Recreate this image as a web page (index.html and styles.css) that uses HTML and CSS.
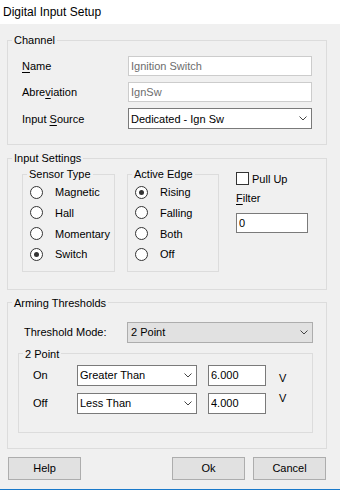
FILE: index.html
```html
<!DOCTYPE html>
<html lang="en">
<head>
  <meta charset="UTF-8">
  <title>Digital Input Setup</title>
  <link rel="stylesheet" href="styles.css">
</head>
<body>
  <div class="titlebar">Digital Input Setup</div>

  <div class="content">
    <fieldset class="group">
      <legend>Channel</legend>
      <div class="channel">
        <label><u>N</u>ame</label>
        <input class="edit disabled" type="text" value="Ignition Switch" readonly>
        <label>Abre<u>v</u>iation</label>
        <input class="edit disabled" type="text" value="IgnSw" readonly>
        <label>Input <u>S</u>ource</label>
        <div class="combo tall">
          <span>Dedicated - Ign Sw</span>
          <svg width="8" height="5" viewBox="0 0 8 5"><polyline points="0.5,0.5 4,4 7.5,0.5" fill="none" stroke="#444" stroke-width="1"/></svg>
        </div>
      </div>
    </fieldset>

    <fieldset class="group">
      <legend>Input Settings</legend>
      <div class="settings">
        <fieldset class="sub sensor">
          <legend>Sensor Type</legend>
          <div class="opt"><span class="radio"></span>Magnetic</div>
          <div class="opt"><span class="radio"></span>Hall</div>
          <div class="opt"><span class="radio"></span>Momentary</div>
          <div class="opt"><span class="radio checked"></span>Switch</div>
        </fieldset>
        <fieldset class="sub edge">
          <legend>Active Edge</legend>
          <div class="opt"><span class="radio checked"></span>Rising</div>
          <div class="opt"><span class="radio"></span>Falling</div>
          <div class="opt"><span class="radio"></span>Both</div>
          <div class="opt"><span class="radio"></span>Off</div>
        </fieldset>
        <div class="extras">
          <div class="check-row"><span class="checkbox"></span>Pull Up</div>
          <div class="filter-label"><u>F</u>ilter</div>
          <input class="edit filter" type="text" value="0">
        </div>
      </div>
    </fieldset>

    <fieldset class="group last">
      <legend>Arming Thresholds</legend>
      <div class="mode">
        <label>Threshold Mode:</label>
        <div class="combo flat">
          <span>2 Point</span>
          <svg width="8" height="5" viewBox="0 0 8 5"><polyline points="0.5,0.5 4,4 7.5,0.5" fill="none" stroke="#444" stroke-width="1"/></svg>
        </div>
      </div>
      <fieldset class="sub points">
        <legend>2 Point</legend>
        <div class="point-rows">
          <label>On</label>
          <div class="combo">
            <span>Greater Than</span>
            <svg width="8" height="5" viewBox="0 0 8 5"><polyline points="0.5,0.5 4,4 7.5,0.5" fill="none" stroke="#444" stroke-width="1"/></svg>
          </div>
          <input class="edit value" type="text" value="6.000">
          <span class="unit unit-on">V</span>

          <label>Off</label>
          <div class="combo">
            <span>Less Than</span>
            <svg width="8" height="5" viewBox="0 0 8 5"><polyline points="0.5,0.5 4,4 7.5,0.5" fill="none" stroke="#444" stroke-width="1"/></svg>
          </div>
          <input class="edit value" type="text" value="4.000">
          <span class="unit unit-off">V</span>
        </div>
      </fieldset>
    </fieldset>

    <div class="buttons">
      <button>Help</button>
      <div class="spacer"></div>
      <button>Ok</button>
      <button>Cancel</button>
    </div>
  </div>
</body>
</html>
```

FILE: styles.css
```css
body {
  margin: 0;
  width: 340px;
  height: 489px;
  background-color: #f0f0f0;
  border-bottom: 1px solid #1979ca;
  font-family: "Liberation Sans", Arial, sans-serif;
  font-size: 11px;
  color: #000;
  overflow: hidden;
}
.titlebar {
  height: 24px;
  line-height: 24px;
  padding-left: 3px;
  background-color: #fff;
  font-size: 12px;
}
.content {
  padding: 8px 0 0 7px;
}
fieldset {
  margin: 0;
  padding: 0;
  border: 1px solid #dcdcdc;
  box-sizing: border-box;
  min-width: 0;
}
legend {
  margin-left: 4px;
  padding: 0 2px;
  line-height: 16px;
}
.group {
  width: 320px;
  margin-bottom: 5px;
}
.group.last {
  margin-bottom: 0;
}
u {
  text-decoration-thickness: 1px;
  text-underline-offset: 2px;
}

/* edit boxes and combos */
.edit {
  box-sizing: border-box;
  height: 20px;
  margin: 0;
  padding: 0 2px;
  border: 1px solid #7a7a7a;
  background-color: #fff;
  font: inherit;
  color: #000;
  outline: none;
}
.edit.disabled {
  border-color: #cccccc;
  color: #6d6d6d;
}
.combo {
  box-sizing: border-box;
  height: 21px;
  display: flex;
  align-items: center;
  justify-content: space-between;
  padding: 0 4px 0 2px;
  border: 1px solid #7a7a7a;
  background-color: #fff;
}
.combo.flat {
  background-color: #e1e1e1;
  border-color: #adadad;
  padding-left: 3px;
}

/* channel */
.channel {
  display: grid;
  grid-template-columns: 106px 184px;
  row-gap: 6px;
  align-items: center;
  padding: 8px 0 15px 14px;
}
.channel .edit {
  width: 184px;
}

/* input settings */
.settings {
  display: flex;
  align-items: flex-start;
  padding: 0 0 17px 14px;
}
.sub.sensor {
  width: 93px;
  margin-right: 12px;
  padding-bottom: 6px;
}
.sub.edge {
  width: 92px;
  margin-right: 17px;
  padding-bottom: 6px;
}
.opt {
  height: 20.67px;
  display: flex;
  align-items: center;
  gap: 12px;
  padding-left: 7px;
}
.radio {
  box-sizing: border-box;
  width: 13px;
  height: 13px;
  border: 1px solid #333;
  border-radius: 50%;
  background-color: #fff;
  display: flex;
  align-items: center;
  justify-content: center;
}
.radio.checked::after {
  content: "";
  width: 5px;
  height: 5px;
  border-radius: 50%;
  background-color: #333;
}
.extras {
  display: flex;
  flex-direction: column;
  align-items: flex-start;
}
.check-row {
  margin-top: 6px;
  height: 13px;
  display: flex;
  align-items: center;
  gap: 3px;
}
.checkbox {
  box-sizing: border-box;
  width: 13px;
  height: 13px;
  border: 1px solid #333;
  background-color: #fff;
}
.filter-label {
  margin-top: 5px;
  line-height: 16px;
}
.edit.filter {
  margin-top: 7px;
  width: 72px;
}

/* arming thresholds */
.mode {
  display: grid;
  grid-template-columns: 103px 186px;
  align-items: center;
  padding: 11px 0 0 16px;
}
.sub.points {
  width: 295px;
  margin: 3px 0 15px 10px;
}
.point-rows {
  display: grid;
  grid-template-columns: 44px 120px 58px auto;
  row-gap: 7px;
  align-items: center;
  padding: 3px 0 18px 14px;
}
.point-rows .edit.value {
  height: 21px;
  width: 58px;
  margin-left: 11px;
}
.unit {
  margin-left: 24px;
  align-self: start;
  line-height: 14px;
}
.unit-on {
  margin-top: 6px;
}
.unit-off {
  margin-top: -2px;
}

/* buttons */
.buttons {
  display: flex;
  margin-top: 8px;
  padding: 0 1px;
  width: 318px;
  gap: 8px;
}
.spacer {
  flex: 1;
}
button {
  box-sizing: border-box;
  width: 73px;
  height: 23px;
  padding: 0;
  border: 1px solid #adadad;
  background-color: #e1e1e1;
  font: inherit;
  color: #000;
}
```
